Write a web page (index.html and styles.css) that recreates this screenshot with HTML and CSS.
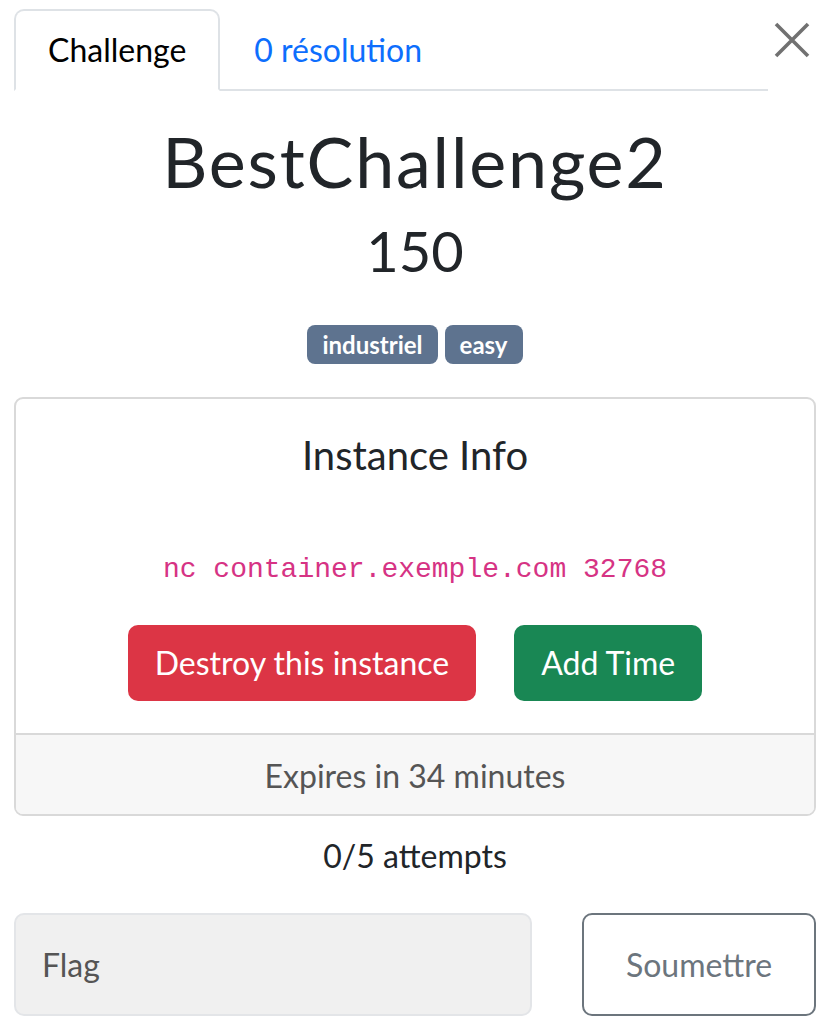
FILE: index.html
```html
<!DOCTYPE html>
<html lang="fr">
<head>
<meta charset="utf-8">
<link rel="stylesheet" href="styles.css">
</head>
<body>
<div class="page">
  <div class="header">
    <ul class="tabs">
      <li class="tab active">Challenge</li>
      <li class="tab link">0 résolution</li>
    </ul>
    <button class="close" aria-label="Close">
      <svg width="36" height="36" viewBox="0 0 36 36"><path d="M2 2 L34 34 M34 2 L2 34" stroke="#717171" stroke-width="3.6" fill="none"/></svg>
    </button>
  </div>
  <h1 class="title">BestChallenge2</h1>
  <h2 class="points">150</h2>
  <div class="tags">
    <span class="badge">industriel</span>
    <span class="badge">easy</span>
  </div>
  <div class="card">
    <div class="card-body">
      <h4 class="card-title">Instance Info</h4>
      <code class="conn">nc container.exemple.com 32768</code>
      <div class="actions">
        <button class="btn btn-danger">Destroy this instance</button>
        <button class="btn btn-success">Add Time</button>
      </div>
    </div>
    <div class="card-footer">Expires in 34 minutes</div>
  </div>
  <p class="attempts">0/5 attempts</p>
  <div class="submit-row">
    <input class="flag" type="text" placeholder="Flag">
    <button class="btn-submit">Soumettre</button>
  </div>
</div>
</body>
</html>
```

FILE: styles.css
```css
* { box-sizing: border-box; }
html, body { margin: 0; padding: 0; background: #fff; }
body {
  font-family: Lato, "Noto Sans", sans-serif;
  color: #212529;
  font-size: 32px;
}
.page {
  padding: 9px 12px 0 14px;
}
.header {
  display: flex;
  align-items: flex-start;
}
.tabs {
  list-style: none;
  margin: 0;
  padding: 0;
  display: flex;
  flex: 1;
  border-bottom: 2px solid #dee2e6;
}
.tab {
  padding: 20px 32px;
  font-size: 32px;
  line-height: 38px;
  margin-bottom: -2px;
  border: 2px solid transparent;
  border-radius: 10px 10px 0 0;
}
.tab.active {
  color: #000;
  border-color: #dee2e6 #dee2e6 #fff;
  background: #fff;
}
.tab.link { color: #0d6efd; }
.close {
  width: 48px;
  height: 48px;
  border: 0;
  background: transparent;
  padding: 0;
  margin-top: 7px;
  display: flex;
  align-items: center;
  justify-content: center;
}
.title {
  margin: 28px 0 0;
  text-align: center;
  font-weight: 400;
  font-size: 70px;
  line-height: 84px;
  letter-spacing: 1.8px;
}
.points {
  margin: 14px 0 0;
  text-align: center;
  font-weight: 400;
  font-size: 56px;
  line-height: 67px;
}
.tags {
  display: flex;
  justify-content: center;
  gap: 7px;
  margin-top: 41px;
}
.badge {
  background: #5e738f;
  color: #fff;
  font-weight: 700;
  font-size: 24px;
  line-height: 39px;
  height: 39px;
  padding: 0 15px;
  border-radius: 8px;
}
.card {
  margin-top: 33px;
  border: 2px solid #d9d9d9;
  border-radius: 9px;
  overflow: hidden;
}
.card-body {
  padding: 32px 20px 32px;
  text-align: center;
}
.card-title {
  margin: 0;
  font-weight: 400;
  font-size: 40px;
  line-height: 48px;
}
.conn {
  display: block;
  margin-top: 74px;
  font-family: "Liberation Mono", monospace;
  font-size: 28px;
  line-height: 34px;
  color: #d63384;
}
.actions {
  display: flex;
  justify-content: center;
  gap: 38px;
  margin-top: 38px;
}
.btn {
  font-family: Lato, "Noto Sans", sans-serif;
  font-size: 32px;
  line-height: 38px;
  color: #fff;
  border: 0;
  border-radius: 10px;
  height: 76px;
  padding: 0 27px;
}
.btn-danger { background: #dc3545; }
.btn-success { background: #198754; }
.card-footer {
  background: #f7f7f7;
  border-top: 2px solid #d9d9d9;
  text-align: center;
  color: #555;
  font-size: 32px;
  line-height: 38px;
  padding: 22px 0 19px;
}
.attempts {
  margin: 21px 0 0;
  text-align: center;
  font-size: 32px;
  line-height: 38px;
}
.submit-row {
  display: flex;
  gap: 50px;
  margin-top: 38px;
}
.flag {
  flex: 0 0 518px;
  height: 103px;
  background: #f0f0f0;
  border: 2px solid #e3e5e8;
  border-radius: 10px;
  padding: 0 26px;
  font-family: Lato, "Noto Sans", sans-serif;
  font-size: 32px;
  color: #212529;
}
.flag::placeholder { color: #555; opacity: 1; }
.btn-submit {
  flex: 1;
  height: 103px;
  background: #fff;
  border: 2px solid #6c757d;
  border-radius: 10px;
  color: #6c757d;
  font-family: Lato, "Noto Sans", sans-serif;
  font-size: 32px;
}
```
